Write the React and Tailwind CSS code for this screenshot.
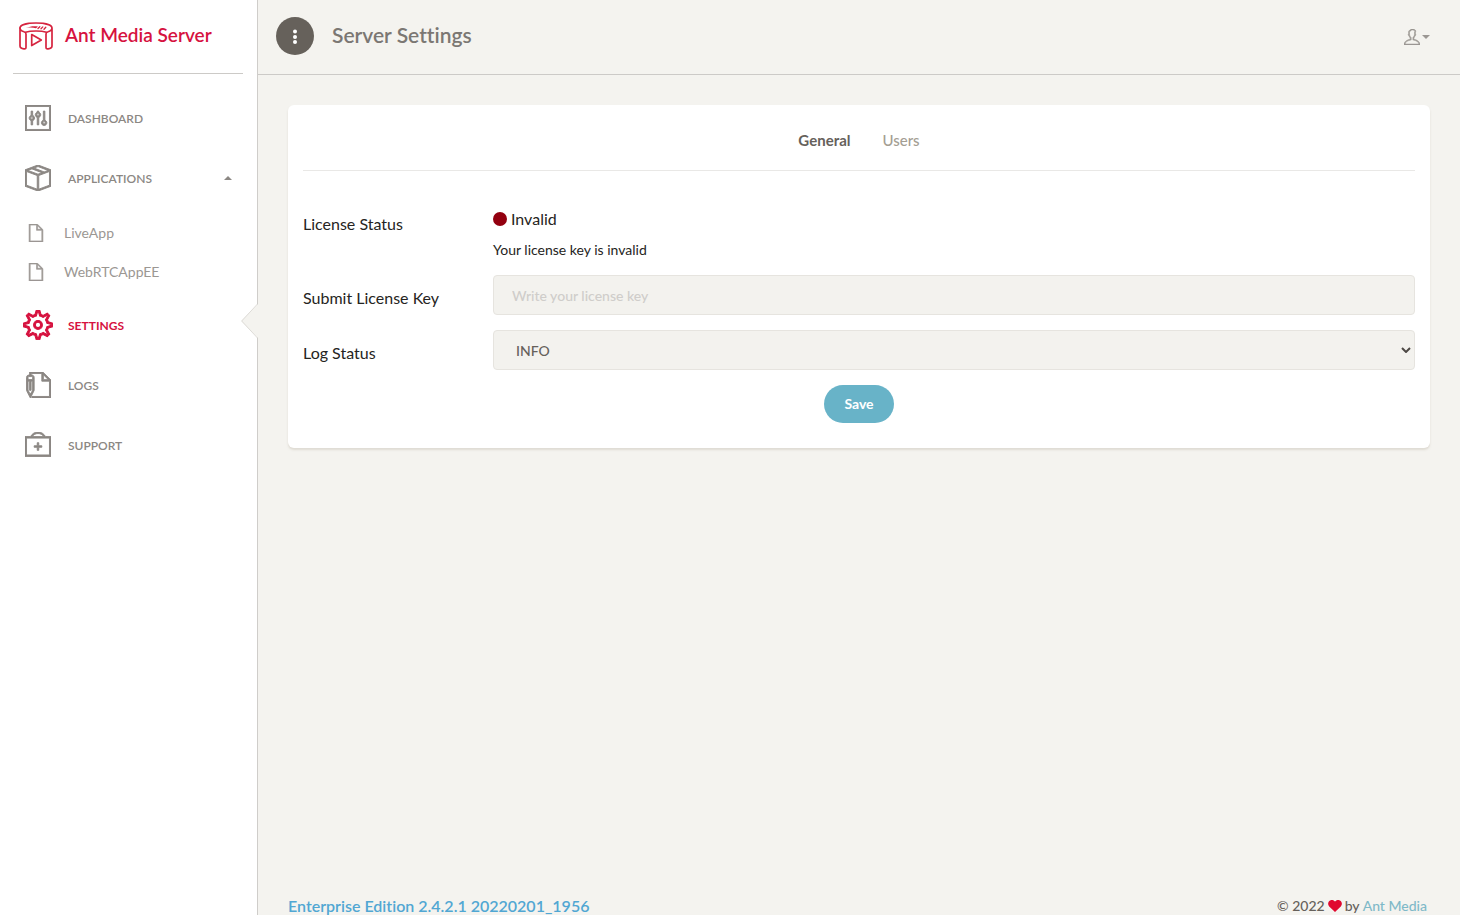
import React from "react";
import {
  TfiPanel,
  TfiPackage,
  TfiFile,
  TfiSettings,
  TfiWrite,
  TfiSupport,
  TfiUser,
} from "react-icons/tfi";

function Logo() {
  return (
    <svg viewBox="0 0 34 28" className="h-7 w-[34px] shrink-0" fill="none" stroke="#d6243f" strokeWidth="1.7" strokeLinecap="round" strokeLinejoin="round" aria-hidden="true">
      <path d="M1 6C1 3 7.500 1 17 1s16 2 16 5v18c0 1.500-1.500 2.500-4 2.800-1.400.2-2-.3-2-1.600V12c0-1.200.6-1.800 2-2.200C31.500 9 33 7.800 33 6" />
      <path d="M1 6c0 1.800 1.500 3 4 3.800 1.400.4 2 1 2 2.200v13.200c0 1.300-.6 1.800-2 1.600C2.500 26.500 1 25.500 1 24z" />
      <path d="M6.500 10.200C9.500 9.300 13 9 17 9s7.500.3 10.500 1.200" />
      <path d="M12.700 12.500l9.600 5.500-9.600 5.500z" />
      <path d="M7 5.900c4-1.700 8-1.900 12-1.400l-2 1.700c-3-.8-6.500-.9-10-.3z" fill="#d6243f" stroke="none" />
      <path d="M19 6.500l1.800-1.700M22 6.800l1.800-1.900M25 7.200l1.800-2" strokeWidth="1.300" />
    </svg>
  );
}

function NavItem({ icon: Icon, label, active, children }) {
  return (
    <a
      href="#"
      aria-current={active ? "page" : undefined}
      className={`relative flex h-[60px] items-center pl-[23px] pr-[25px] text-xs ${
        active ? "font-bold text-[#d6123f]" : "font-semibold text-[#8b8783]"
      }`}
    >
      <span className="flex size-[30px] shrink-0 items-center justify-center">
        <Icon className={active ? "size-[30px] stroke-current [stroke-width:0.6]" : "size-[26px] stroke-current [stroke-width:0.6]"} />
      </span>
      <span className="ml-[15px] flex-1 pt-0.5">{label}</span>
      {children}
    </a>
  );
}

function SubItem({ label }) {
  return (
    <a href="#" className="flex h-[39px] items-center pl-[27px] text-sm text-[#9b9793]">
      <TfiFile className="size-[18px] shrink-0 stroke-current [stroke-width:0.6]" />
      <span className="ml-[19px]">{label}</span>
    </a>
  );
}

function Sidebar() {
  return (
    <aside className="w-[258px] shrink-0 border-r border-[#cfcdca] bg-white">
      <div className="mr-[14px] ml-[13px] flex h-[74px] items-center border-b border-[#cccac7] pr-2 pb-0.5 pl-1.5">
        <a href="#" className="flex items-center gap-3 text-[19px] font-semibold text-[#d6123f]">
          <Logo />
          Ant Media Server
        </a>
      </div>
      <nav className="pt-[14px]">
        <NavItem icon={TfiPanel} label="DASHBOARD" />
        <NavItem icon={TfiPackage} label="APPLICATIONS">
          <svg viewBox="0 0 8 4" className="h-1 w-2" fill="currentColor" aria-hidden="true">
            <path d="M0 4l4-4 4 4z" />
          </svg>
        </NavItem>
        <div className="pt-[5px] pb-1">
          <SubItem label="LiveApp" />
          <SubItem label="WebRTCAppEE" />
        </div>
        <NavItem icon={TfiSettings} label="SETTINGS" active>
          <svg viewBox="0 0 17 34" className="absolute -right-px top-[9px] h-[34px] w-[17px]" aria-hidden="true">
            <path d="M17 0v34L0 17z" fill="#f4f3ef" />
            <path d="M16.500 0L.7 17l15.800 17" fill="none" stroke="#dddbd7" />
          </svg>
        </NavItem>
        <NavItem icon={TfiWrite} label="LOGS" />
        <NavItem icon={TfiSupport} label="SUPPORT" />
      </nav>
    </aside>
  );
}

function Header() {
  return (
    <header className="flex h-[75px] items-center border-b border-[#cccac7] pr-[30px] pl-[18px] pb-0.5">
      <button type="button" aria-label="Toggle menu" className="flex size-[38px] items-center justify-center rounded-full bg-[#66615b] text-white">
        <svg viewBox="0 0 4 16" className="h-4 w-1" fill="currentColor" aria-hidden="true">
          <circle cx="2" cy="3.500" r="2" />
          <circle cx="2" cy="9" r="2" />
          <circle cx="2" cy="14" r="2" />
        </svg>
      </button>
      <h1 className="ml-[18px] flex-1 pb-0.5 text-[21px] leading-7 font-semibold text-[#7b7773] [font-variant-ligatures:none]">Server Settings</h1>
      <button type="button" aria-label="Account" className="flex items-center gap-0.5 pt-0.5 text-[#9b9793]">
        <TfiUser className="size-4 stroke-current [stroke-width:0.6]" />
        <svg viewBox="0 0 8 4" className="h-1 w-2" fill="currentColor" aria-hidden="true">
          <path d="M0 0l4 4 4-4z" />
        </svg>
      </button>
    </header>
  );
}

function SettingsCard() {
  return (
    <section className="rounded-md bg-white px-[15px] pb-[25px] shadow-[0_2px_2px_rgba(204,197,185,0.5)]">
      <div className="flex h-[66px] items-center justify-center gap-8 border-b border-[#e9e8e6] pt-1.5">
        <button type="button" className="text-[15px] font-bold text-[#66615b]">General</button>
        <button type="button" className="text-[15px] font-medium text-[#a49e93]">Users</button>
      </div>
      <form onSubmit={(e) => e.preventDefault()} className="pt-9 text-base text-[#252422]">
        <div className="grid grid-cols-[190px_1fr]">
          <div className="pt-[5px] leading-6">License Status</div>
          <div>
            <div className="flex items-center gap-1 leading-6">
              <span className="size-3.5 rounded-full bg-[#930010]" />
              Invalid
            </div>
            <p className="mt-[9px] text-sm leading-5">Your license key is invalid</p>
          </div>
        </div>
        <div className="mt-[15px] grid grid-cols-[190px_1fr]">
          <label htmlFor="license" className="pt-[11px] leading-6">Submit License Key</label>
          <input
            id="license"
            type="text"
            placeholder="Write your license key"
            className="h-10 w-full rounded border border-[#e6e4df] bg-[#f3f2ee] px-[18px] text-sm font-medium text-[#66615b] outline-none placeholder:text-[#cfcdca]"
          />
        </div>
        <div className="mt-[15px] grid grid-cols-[190px_1fr]">
          <label htmlFor="log" className="pt-[11px] leading-6">Log Status</label>
          <div className="relative">
            <select
              id="log"
              defaultValue="INFO"
              className="h-10 w-full appearance-none rounded border border-[#e6e4df] bg-[#f3f2ee] px-[22px] pt-0.5 text-sm font-medium text-[#66615b] outline-none"
            >
              <option>INFO</option>
              <option>WARN</option>
              <option>ERROR</option>
            </select>
            <svg viewBox="0 0 10 6" className="pointer-events-none absolute top-[17px] right-1 h-1.5 w-2.5" fill="none" stroke="#4d4945" strokeWidth="2" aria-hidden="true">
              <path d="M1 1l4 4 4-4" />
            </svg>
          </div>
        </div>
        <div className="mt-[15px] flex justify-center">
          <button type="submit" className="h-[38px] rounded-full bg-[#68b3c8] px-5 text-sm font-bold text-white">Save</button>
        </div>
      </form>
    </section>
  );
}

function Footer() {
  return (
    <footer className="flex items-center justify-between pr-[33px] pl-[30px] text-base leading-[18px]">
      <span className="font-semibold text-[#51a7d3] [font-variant-ligatures:none]">Enterprise Edition 2.4.2.1 20220201_1956</span>
      <span className="flex items-center gap-[3px] text-sm leading-[18px] font-medium text-[#66615b]">
        © 2022
        <svg viewBox="0 0 14 12" className="h-3 w-3.5" fill="#e00930" aria-hidden="true">
          <path d="M7 12L1.200 6.400C-2 3 2.500-2.200 6.300.9L7 1.600l.7-.7C11.500-2.200 16 3 12.800 6.400z" />
        </svg>
        by
        <a href="#" className="text-[#7fb9c8]">Ant Media</a>
      </span>
    </footer>
  );
}

export default function App() {
  return (
    <div className="flex min-h-screen bg-[#f4f3ef] font-['Lato',sans-serif]">
      <Sidebar />
      <div className="flex min-w-0 flex-1 flex-col">
        <Header />
        <main className="flex-1 p-[30px]">
          <SettingsCard />
        </main>
        <Footer />
      </div>
    </div>
  );
}
